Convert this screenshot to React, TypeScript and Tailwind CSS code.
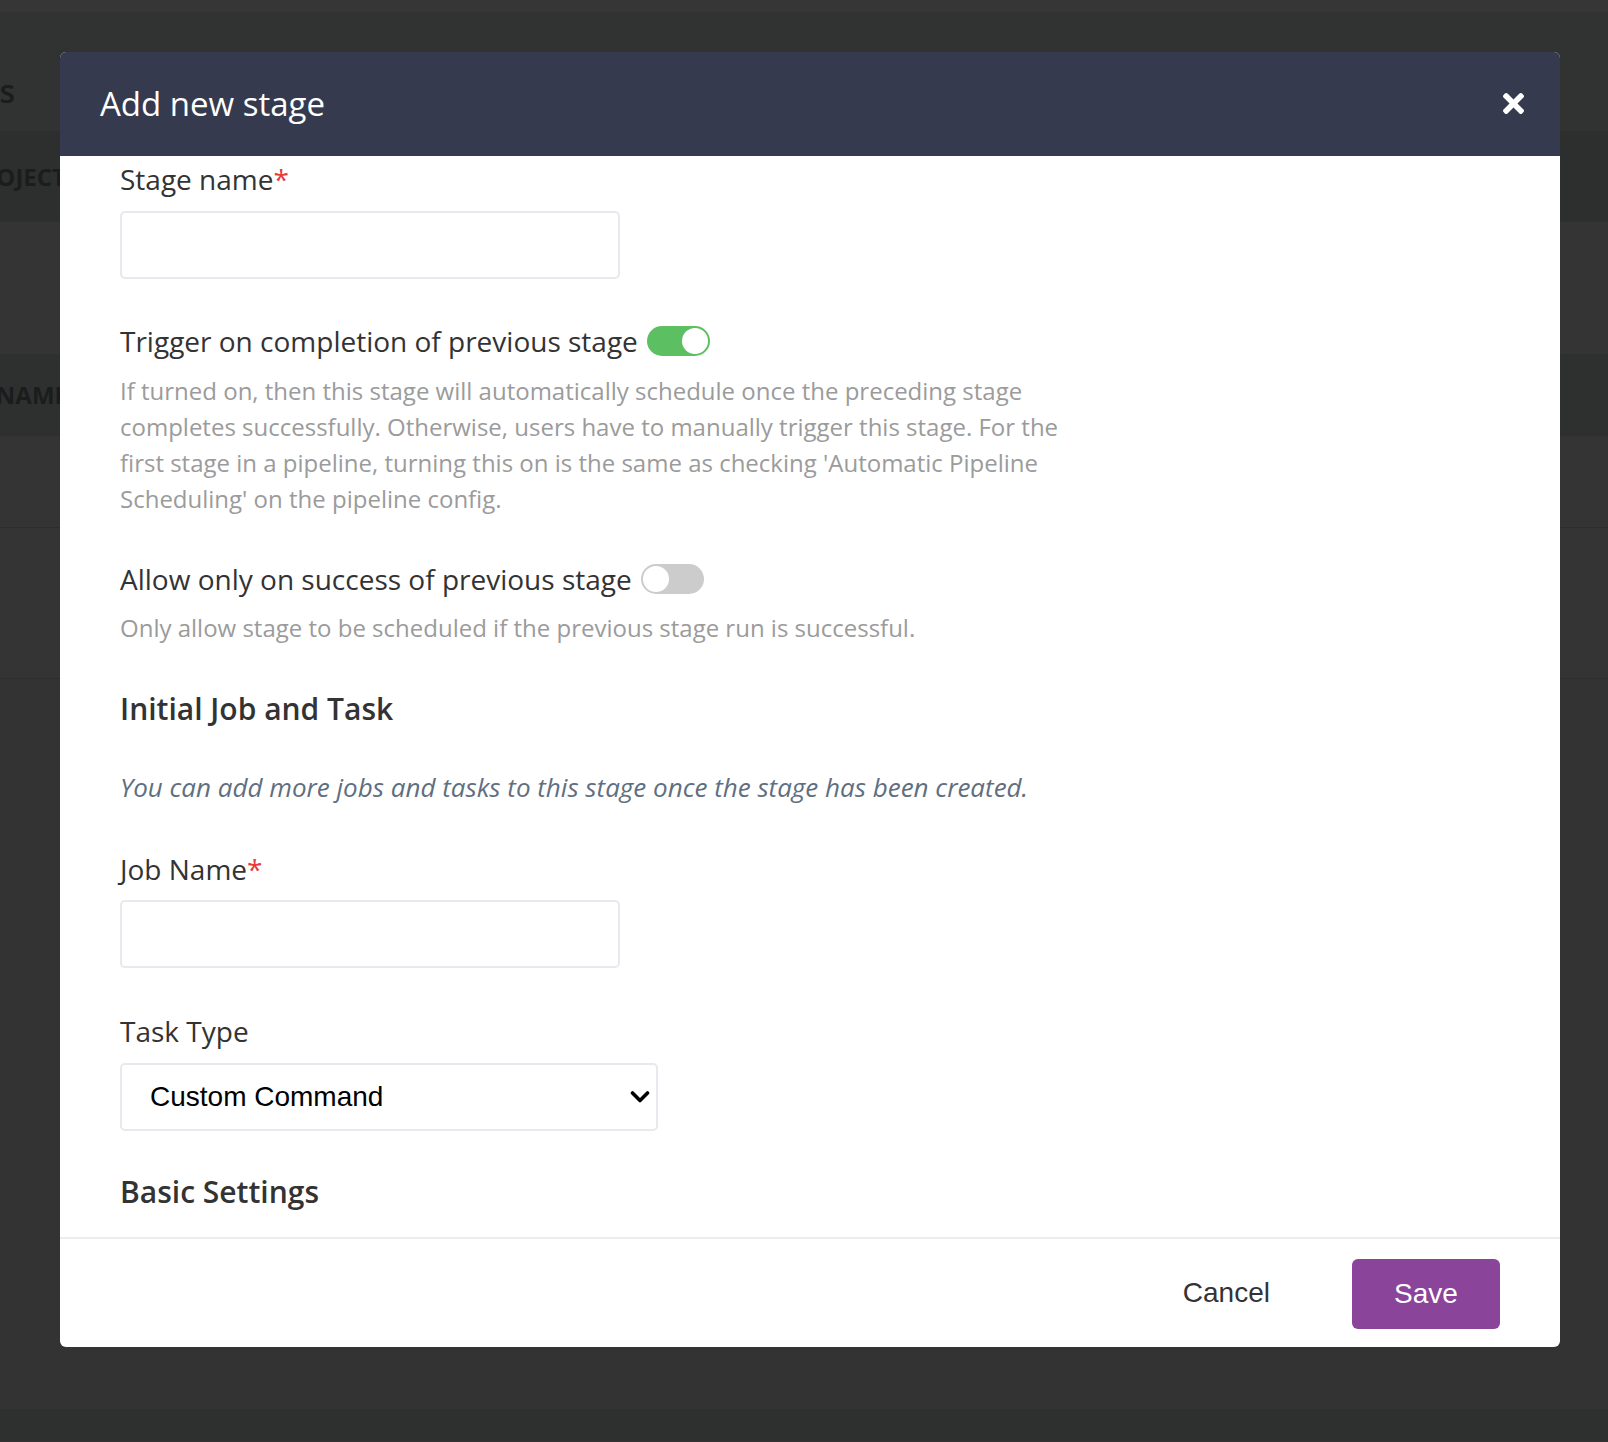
import React from "react";

function Toggle({ on }: { on: boolean }) {
  return on ? (
    <div className="w-[63px] h-[30px] rounded-full bg-[#5cbf62] flex items-center justify-end pr-[2px] shrink-0">
      <div className="w-[26px] h-[26px] rounded-full bg-white" />
    </div>
  ) : (
    <div className="w-[63px] h-[30px] rounded-full bg-[#cccccc] flex items-center justify-start pl-[2px] shrink-0">
      <div className="w-[26px] h-[26px] rounded-full bg-white" />
    </div>
  );
}

function Req() {
  return <span className="text-[#e53b3b]">*</span>;
}

export default function App() {
  return (
    <div className="relative w-[1608px] h-[1442px] overflow-hidden bg-[#333433] font-['Open_Sans',sans-serif]">
      {/* background page under overlay */}
      <div className="flex flex-col w-full">
        <div className="h-[12px] bg-[#363636]" />
        <div className="h-[119px] bg-[#313232] flex items-center">
          <div className="w-[15px] flex justify-end whitespace-nowrap text-[32px] font-semibold text-[#1b1c1c] pt-[38px]">
            Stages
          </div>
        </div>
        <div className="h-[91px] bg-[#2d2f2e] flex items-center">
          <div className="w-[66px] flex justify-end whitespace-nowrap text-[24px] font-bold text-[#1b1c1c]">
            PROJECT
          </div>
        </div>
        <div className="h-[132px] bg-[#333433]" />
        <div className="h-[82px] bg-[#2e302f] flex items-center">
          <div className="w-[68px] flex justify-end whitespace-nowrap text-[24px] font-bold text-[#1b1c1c]">
            NAME
          </div>
        </div>
        <div className="h-[92px] bg-[#333433] border-b border-[#2c2d2d]" />
        <div className="h-[151px] bg-[#333433] border-b border-[#2c2d2d]" />
        <div className="h-[730px] bg-[#323332]" />
        <div className="h-[32px] bg-[#2e2f2f]" />
      </div>

      {/* modal */}
      <div className="absolute left-[60px] top-[52px] w-[1500px] h-[1295px] bg-white rounded-[6px] overflow-hidden flex flex-col">
        <div className="h-[104px] shrink-0 bg-[#353a4e] flex items-center justify-between pl-[40px] pr-[36px]">
          <h1 className="text-[33px] text-white font-normal leading-none pb-[2px]">Add new stage</h1>
          <svg width="21" height="21" viewBox="0 80 352 352" className="mt-[-2px]">
            <path
              fill="#ffffff"
              d="M242.72 256l100.07-100.07c12.28-12.28 12.28-32.19 0-44.48l-22.24-22.24c-12.28-12.28-32.19-12.28-44.48 0L176 189.28 75.93 89.21c-12.28-12.28-32.19-12.28-44.48 0L9.21 111.45c-12.28 12.28-12.28 32.19 0 44.48L109.28 256 9.21 356.07c-12.28 12.28-12.28 32.19 0 44.48l22.24 22.24c12.28 12.28 32.2 12.28 44.48 0L176 322.72l100.07 100.07c12.28 12.28 32.2 12.28 44.48 0l22.24-22.24c12.28-12.28 12.28-32.19 0-44.48L242.72 256z"
            />
          </svg>
        </div>

        <div className="flex-1 overflow-hidden pl-[60px] pt-[2px] flex flex-col items-start text-[#333333]">
          <label className="text-[28px] leading-[42px]">
            Stage name<Req />
          </label>
          <div className="mt-[11px] w-[500px] h-[68px] border-2 border-[#e6e9ed] rounded-[5px]" />

          <div className="mt-[41px] flex items-center gap-[9px]">
            <span className="text-[28px] leading-[42px]">Trigger on completion of previous stage</span>
            <Toggle on />
          </div>
          <p className="mt-[11px] w-[940px] text-[24px] leading-[36px] text-[#9b9b9b]">
            If turned on, then this stage will automatically schedule once the preceding stage completes
            successfully. Otherwise, users have to manually trigger this stage. For the first stage in a
            pipeline, turning this on is the same as checking 'Automatic Pipeline Scheduling' on the pipeline
            config.
          </p>

          <div className="mt-[41px] flex items-center gap-[9px]">
            <span className="text-[28px] leading-[42px]">Allow only on success of previous stage</span>
            <Toggle on={false} />
          </div>
          <p className="mt-[10px] text-[24px] leading-[36px] text-[#9b9b9b]">
            Only allow stage to be scheduled if the previous stage run is successful.
          </p>

          <h2 className="mt-[40px] text-[30px] leading-[45px] font-semibold text-[#333333]">
            Initial Job and Task
          </h2>
          <p className="mt-[37px] text-[26px] leading-[39px] italic text-[#5f6f80]">
            You can add more jobs and tasks to this stage once the stage has been created.
          </p>

          <label className="mt-[41px] text-[28px] leading-[42px]">
            Job Name<Req />
          </label>
          <div className="mt-[10px] w-[500px] h-[68px] border-2 border-[#e6e9ed] rounded-[5px]" />

          <label className="mt-[42px] text-[28px] leading-[42px]">Task Type</label>
          <div className="mt-[11px] w-[538px] h-[68px] border-2 border-[#e6e9ed] rounded-[5px] flex items-center justify-between pl-[28px] pr-[6px]">
            <span className="font-['Liberation_Sans',Arial,sans-serif] text-[28px] text-black leading-none">
              Custom Command
            </span>
            <svg width="20" height="14" viewBox="0 0 20 14">
              <polyline points="2.5,3 10,10.5 17.5,3" fill="none" stroke="#000" strokeWidth="3.6" strokeLinecap="round" strokeLinejoin="round" />
            </svg>
          </div>

          <h2 className="mt-[38px] text-[30px] leading-[45px] font-semibold text-[#333333]">Basic Settings</h2>
        </div>

        <div className="h-[110px] shrink-0 border-t-2 border-[#eaecef] flex items-center justify-end pr-[60px] gap-[82px]">
          <button className="font-['Liberation_Sans',Arial,sans-serif] text-[28px] text-[#333333] leading-none">
            Cancel
          </button>
          <button className="w-[148px] h-[70px] rounded-[6px] bg-[#8a4499] text-white font-['Liberation_Sans',Arial,sans-serif] text-[28px] leading-none mt-[2px]">
            Save
          </button>
        </div>
      </div>
    </div>
  );
}
